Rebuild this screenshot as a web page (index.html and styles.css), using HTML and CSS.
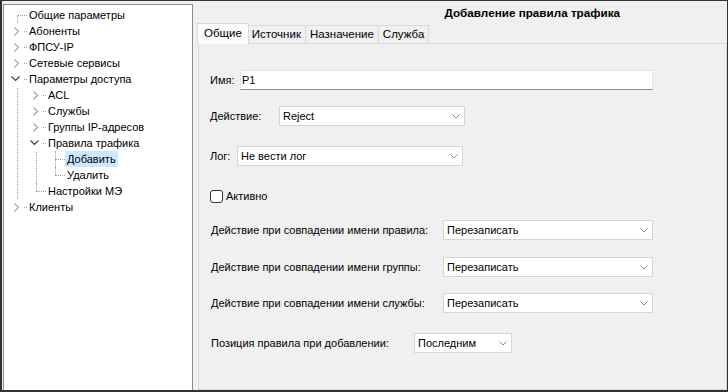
FILE: index.html
```html
<!DOCTYPE html>
<html lang="ru">
<head>
  <meta charset="UTF-8" />
  <title>Добавление правила трафика</title>
  <link rel="stylesheet" href="styles.css">
</head>
<body>

<div class="window">
  <div class="tree-panel">
    <ul class="tree">
      <li><div class="row"><span class="toggle"></span><span class="label">Общие параметры</span></div></li>
      <li><div class="row"><span class="toggle has"><svg width="16" height="16"><polyline points="6.5,4.5 10.5,8.5 6.5,12.5" class="closed"/></svg></span><span class="label">Абоненты</span></div></li>
      <li><div class="row"><span class="toggle has"><svg width="16" height="16"><polyline points="6.5,4.5 10.5,8.5 6.5,12.5" class="closed"/></svg></span><span class="label">ФПСУ-IP</span></div></li>
      <li><div class="row"><span class="toggle has"><svg width="16" height="16"><polyline points="6.5,4.5 10.5,8.5 6.5,12.5" class="closed"/></svg></span><span class="label">Сетевые сервисы</span></div></li>
      <li>
        <div class="row"><span class="toggle has"><svg width="16" height="16"><polyline points="3.5,5.5 7.5,9.5 11.5,5.5" class="open"/></svg></span><span class="label">Параметры доступа</span></div>
        <ul>
          <li><div class="row"><span class="toggle has"><svg width="16" height="16"><polyline points="6.5,4.5 10.5,8.5 6.5,12.5" class="closed"/></svg></span><span class="label">ACL</span></div></li>
          <li><div class="row"><span class="toggle has"><svg width="16" height="16"><polyline points="6.5,4.5 10.5,8.5 6.5,12.5" class="closed"/></svg></span><span class="label">Службы</span></div></li>
          <li><div class="row"><span class="toggle has"><svg width="16" height="16"><polyline points="6.5,4.5 10.5,8.5 6.5,12.5" class="closed"/></svg></span><span class="label">Группы IP-адресов</span></div></li>
          <li>
            <div class="row"><span class="toggle has"><svg width="16" height="16"><polyline points="3.5,5.5 7.5,9.5 11.5,5.5" class="open"/></svg></span><span class="label">Правила трафика</span></div>
            <ul>
              <li><div class="row"><span class="toggle"></span><span class="label selected">Добавить</span></div></li>
              <li><div class="row"><span class="toggle"></span><span class="label">Удалить</span></div></li>
            </ul>
          </li>
          <li><div class="row"><span class="toggle"></span><span class="label">Настройки МЭ</span></div></li>
        </ul>
      </li>
      <li><div class="row"><span class="toggle has"><svg width="16" height="16"><polyline points="6.5,4.5 10.5,8.5 6.5,12.5" class="closed"/></svg></span><span class="label">Клиенты</span></div></li>
    </ul>
  </div>

  <div class="main">
    <div class="title">Добавление правила трафика</div>

    <div class="tabs">
      <div class="tab active">Общие</div>
      <div class="tab">Источник</div>
      <div class="tab">Назначение</div>
      <div class="tab">Служба</div>
    </div>

    <div class="page">
      <div class="form">
        <div class="field">
          <span class="caption w-name">Имя:</span>
          <div class="input input-name">P1</div>
        </div>

        <div class="field mt16">
          <span class="caption w-action">Действие:</span>
          <div class="combo combo-action"><span>Reject</span><svg width="8" height="5"><polyline points="0.5,0.5 4,4 7.5,0.5"/></svg></div>
        </div>

        <div class="field mt20">
          <span class="caption w-log">Лог:</span>
          <div class="combo combo-log"><span>Не вести лог</span><svg width="8" height="5"><polyline points="0.5,0.5 4,4 7.5,0.5"/></svg></div>
        </div>

        <div class="field mt20">
          <label class="check"><span class="box"></span>Активно</label>
        </div>

        <div class="field mt14">
          <span class="caption w-long">Действие при совпадении имени правила:</span>
          <div class="combo combo-long"><span>Перезаписать</span><svg width="8" height="5"><polyline points="0.5,0.5 4,4 7.5,0.5"/></svg></div>
        </div>

        <div class="field mt17">
          <span class="caption w-long">Действие при совпадении имени группы:</span>
          <div class="combo combo-long"><span>Перезаписать</span><svg width="8" height="5"><polyline points="0.5,0.5 4,4 7.5,0.5"/></svg></div>
        </div>

        <div class="field mt16">
          <span class="caption w-long">Действие при совпадении имени службы:</span>
          <div class="combo combo-long"><span>Перезаписать</span><svg width="8" height="5"><polyline points="0.5,0.5 4,4 7.5,0.5"/></svg></div>
        </div>

        <div class="field mt20">
          <span class="caption w-pos">Позиция правила при добавлении:</span>
          <div class="combo combo-pos"><span>Последним</span><svg width="8" height="5"><polyline points="0.5,0.5 4,4 7.5,0.5"/></svg></div>
        </div>
      </div>
    </div>
  </div>
</div>

</body>
</html>
```

FILE: styles.css
```css
* { margin: 0; padding: 0; box-sizing: border-box; }

body {
  font-family: "Liberation Sans", Arial, sans-serif;
  font-size: 11px;
  color: #000;
  background: #f0f0f0;
}

.window {
  width: 728px;
  height: 392px;
  border: 1px solid #333;
  border-left-width: 2px;
  border-bottom-width: 2px;
  background: #f0f0f0;
  display: flex;
  padding: 3px 0 0 1px;
  overflow: hidden;
}

/* tree */

.tree-panel {
  width: 190px;
  flex-shrink: 0;
  background: #fff;
  border: 1px solid #8c8c8c;
  border-bottom: none;
}

.tree, .tree ul {
  list-style: none;
}

.tree { padding-top: 2px; }

.tree ul { margin-left: 19px; }

.tree li { position: relative; }

.tree li::before {
  content: "";
  position: absolute;
  left: 13px;
  top: 0;
  bottom: 0;
  border-left: 1px dotted #a0a0a0;
}

.tree > li:first-child::before { top: 8px; }

.tree li:last-child::before {
  bottom: auto;
  height: 8px;
}

.row {
  position: relative;
  display: flex;
  align-items: center;
  height: 16px;
  padding-left: 4px;
}

.row::before {
  content: "";
  position: absolute;
  left: 13px;
  top: 8px;
  width: 10px;
  border-top: 1px dotted #a0a0a0;
}

.toggle {
  width: 16px;
  height: 16px;
  margin-right: 3px;
  position: relative;
  z-index: 1;
}

.toggle.has { background: #fff; }

.toggle svg { display: block; }

.toggle polyline {
  fill: none;
  stroke-width: 1.2;
}

.toggle .closed { stroke: #a6a6a6; }
.toggle .open { stroke: #404040; }

.label {
  padding: 0 2px;
  line-height: 16px;
  white-space: nowrap;
  position: relative;
  z-index: 1;
}

.label.selected { background: #cce8ff; }

/* right side */

.main {
  flex: 1;
  display: flex;
  flex-direction: column;
  padding-left: 4px;
}

.title {
  height: 18px;
  line-height: 18px;
  font-size: 11.7px;
  font-weight: bold;
  text-align: right;
  padding-right: 107px;
}

.tabs {
  display: flex;
  align-items: flex-end;
  height: 21px;
  font-size: 11.5px;
}

.tab {
  height: 18px;
  line-height: 17px;
  padding: 0 4px;
  border: 1px solid #d9d9d9;
  border-bottom: none;
  margin-left: -1px;
  background: #f0f0f0;
}

.tab.active {
  height: 21px;
  line-height: 19px;
  margin-left: 0;
  margin-right: -1px;
  padding: 0 6px;
  margin-bottom: -1px;
  background: #fbfbfb;
  position: relative;
  z-index: 1;
}

.page {
  flex: 1;
  margin-left: 1px;
  border: 1px solid #d9d9d9;
  background: #f0f0f0;
}

.form {
  display: flex;
  flex-direction: column;
  padding: 26px 0 0 11px;
}

.field {
  display: flex;
  align-items: center;
  height: 20px;
}

.mt14 { margin-top: 14px; }
.mt16 { margin-top: 16px; }
.mt17 { margin-top: 17px; }
.mt20 { margin-top: 20px; }

.caption { white-space: nowrap; flex-shrink: 0; }

.w-name { width: 30px; }
.w-action { width: 69px; }
.w-log { width: 27px; }
.w-long { width: 233px; padding-left: 1px; }
.w-pos { width: 204px; padding-left: 1px; }

.input {
  height: 20px;
  line-height: 18px;
  background: #fff;
  border: 1px solid #e3e3e3;
  border-bottom-color: #8d8d8d;
  padding-left: 1px;
}

.input-name { width: 413px; }

.combo {
  height: 20px;
  background: #fff;
  border: 1px solid #d6d6d6;
  display: flex;
  align-items: center;
  justify-content: space-between;
  padding: 0 4px 0 3px;
}

.combo svg { display: block; }

.combo polyline {
  fill: none;
  stroke: #8a8a8a;
  stroke-width: 1;
}

.combo-action { width: 186px; }
.combo-log { width: 226px; }
.combo-long { width: 210px; }
.combo-pos { width: 98px; }

.check {
  display: flex;
  align-items: center;
  gap: 3px;
}

.check .box {
  width: 13px;
  height: 13px;
  border: 1px solid #333;
  border-radius: 3px;
  background: #fff;
}
```
